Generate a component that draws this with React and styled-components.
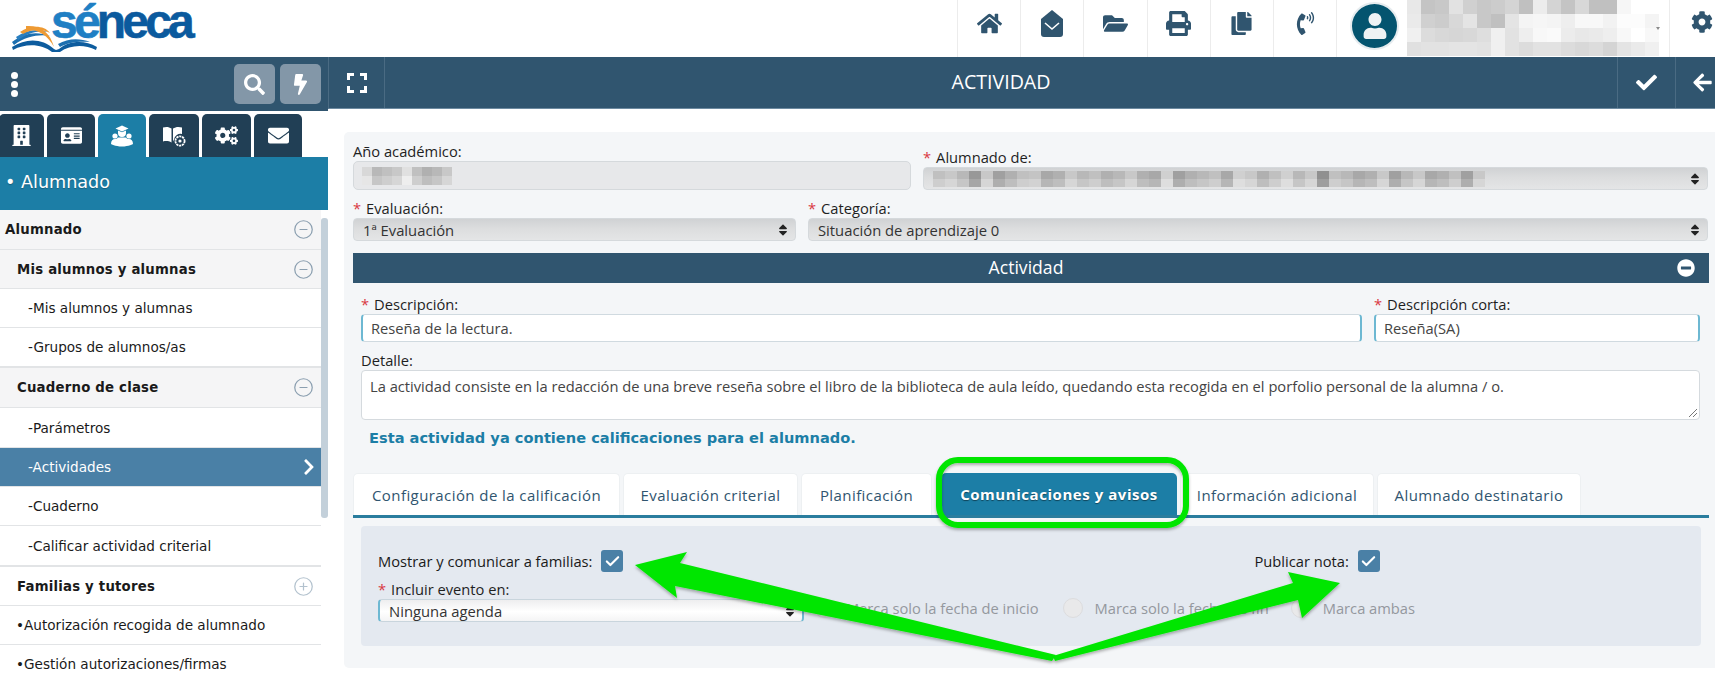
import React from "react";
import styled, { createGlobalStyle } from "styled-components";
import {
  FaHome, FaFolderOpen, FaPrint, FaCopy, FaPhoneVolume, FaCog, FaUser,
  FaSearch, FaBolt, FaBuilding, FaIdCard, FaCogs, FaEnvelope, FaCheck, FaArrowLeft,
  FaMinusCircle, FaChevronRight, FaSort,
} from "react-icons/fa";
import { LuCheck, LuCircleMinus, LuCirclePlus } from "react-icons/lu";

const GlobalStyle = createGlobalStyle`
  html, body { margin: 0; padding: 0; background: #fff; height: 681px; overflow: hidden; }
  body { font-family: "Open Sans", "DejaVu Sans", sans-serif; font-size: 14.7px; color: #1c1c1c; }
  * { box-sizing: border-box; }
`;

const Page = styled.div`
  position: relative;
  width: 1715px;
  height: 681px;
  overflow: hidden;
`;

const Header = styled.header`
  height: 57px;
  display: flex;
  align-items: stretch;
`;
const LogoWrap = styled.div`
  width: 957px;
`;
const HeaderIcon = styled.div`
  width: 63.2px;
  border-left: 1px solid #ececec;
  display: flex;
  align-items: center;
  justify-content: center;
  color: #30556f;
  font-size: ${(p) => p.$size || 25}px;
  padding-bottom: 10px;
`;
const Profile = styled.div`
  width: 333px;
  border-left: 1px solid #ececec;
  display: flex;
  align-items: center;
  padding-left: 13px;
`;
const Avatar = styled.div`
  width: 49px;
  height: 48px;
  flex-shrink: 0;
  margin-top: -5px;
  border-radius: 50%;
  background: #04546f;
  border: 2px solid #e6ecef;
  color: #eef2f4;
  font-size: 26px;
  display: flex;
  align-items: center;
  justify-content: center;
`;
const Pixelated = styled.svg`
  margin-left: 8px;
  display: block;
`;
const GearCell = styled.div`
  flex: 1;
  border-left: 1px solid #ececec;
  display: flex;
  align-items: center;
  padding: 0 0 13px 21px;
  color: #30556f;
  font-size: 22px;
`;

const Body = styled.div`
  display: flex;
  height: 624px;
`;

const Sidebar = styled.aside`
  position: relative;
  width: 328px;
  flex-shrink: 0;
  overflow: hidden;
  font-family: "DejaVu Sans", sans-serif;
`;
const SideToolbar = styled.div`
  height: 54px;
  background: #30556f;
  display: flex;
  align-items: center;
  padding-right: 7px;
  gap: 5px;
`;
const Dots = styled.div`
  width: 8px;
  margin: 0 auto 0 11px;
  display: flex;
  flex-direction: column;
  gap: 2px;
  span {
    width: 7px;
    height: 7px;
    border-radius: 50%;
    background: #fff;
  }
`;
const ToolButton = styled.div`
  width: 41px;
  height: 40px;
  border-radius: 5px;
  background: #8397a8;
  color: #fff;
  font-size: ${(p) => p.$size || 21}px;
  display: flex;
  align-items: center;
  justify-content: center;
`;
const ModuleTabs = styled.div`
  height: 46px;
  padding-top: 3px;
  display: flex;
  gap: 3px;
  margin-left: -1px;
`;
const ModuleTab = styled.div`
  width: ${(p) => p.$w}px;
  border-radius: 5px 5px 0 0;
  background: ${(p) => (p.$active ? "#1c7ea6" : "#213f55")};
  color: #fff;
  font-size: ${(p) => p.$size || 21}px;
  display: flex;
  align-items: center;
  justify-content: center;
`;
const Band = styled.div`
  height: 53px;
  background: #1c7ea6;
  color: #fff;
  font-size: 17.6px;
  display: flex;
  align-items: center;
  padding: 0 0 4px 5px;
  text-shadow: 0 1px 1px rgba(0, 0, 0, 0.25);
`;
const Menu = styled.nav`
  width: 321px;
`;
const Row = styled.div`
  height: ${(p) => p.$h || 39}px;
  display: flex;
  align-items: center;
  justify-content: space-between;
  padding-left: ${(p) => p.$indent || 0}px;
  padding-right: 7px;
  font-size: ${(p) => (p.$bold ? 13.3 : 13.6)}px;
  font-weight: ${(p) => (p.$bold ? 700 : 400)};
  letter-spacing: ${(p) => (p.$bold ? 0.2 : 0)}px;
  background: ${(p) => (p.$active ? "#4a80a6" : p.$group ? "#f5f5f6" : "#fff")};
  color: ${(p) => (p.$active ? "#fff" : "#1a1a1a")};
  border-bottom: ${(p) => (p.$thick ? 2 : 1)}px solid #e2e4e6;
`;
const RowIcon = styled.span`
  display: flex;
  color: ${(p) => p.$color || "#8b9fb0"};
  font-size: ${(p) => p.$size || 21}px;
  margin-right: ${(p) => p.$mr || 0}px;
`;
const ScrollThumb = styled.div`
  position: absolute;
  top: 161px;
  right: 0;
  width: 7px;
  height: 300px;
  border-radius: 3px;
  background: #c3d0da;
`;

const Main = styled.main`
  flex: 1;
  display: flex;
  flex-direction: column;
`;
const TitleBar = styled.div`
  height: 52px;
  background: #30556f;
  color: #fff;
  display: flex;
  align-items: stretch;
  border-left: 1px solid #4a6b83;
  border-bottom: 1px solid #6d8aa0;
`;
const BarCell = styled.div`
  width: ${(p) => p.$w}px;
  display: flex;
  align-items: center;
  justify-content: ${(p) => p.$justify || "center"};
  padding-left: ${(p) => p.$pl || 0}px;
  font-size: 21px;
  ${(p) => p.$line && "border-left: 1px solid #4a6b83;"}
  ${(p) => p.$lineRight && "border-right: 1px solid #4a6b83;"}
`;
const Title = styled.div`
  flex: 1;
  display: flex;
  align-items: center;
  justify-content: center;
  font-size: 19.6px;
  padding-bottom: 2px;
`;
const Card = styled.section`
  margin: 23px 0 0 16px;
  height: 536px;
  background: #f4f6f8;
  border-radius: 5px 0 0 5px;
  padding: 10px 6px 0 9px;
`;
const FormRow = styled.div`
  display: flex;
  align-items: flex-end;
  gap: ${(p) => p.$gap || 12}px;
  margin-top: ${(p) => p.$mt || 0}px;
  padding: ${(p) => (p.$inset ? "0 9px 0 8px" : "0 1px 0 0")};
`;
const Field = styled.div`
  flex: ${(p) => (p.$w ? `0 0 ${p.$w}px` : 1)};
  display: flex;
  flex-direction: column;
  min-width: 0;
`;
const Label = styled.label`
  font-size: 14.7px;
  line-height: 19px;
  height: 19px;
  color: #1f1f1f;
  white-space: nowrap;
  b {
    color: #d9383f;
    font-weight: 400;
    margin-right: 5px;
  }
`;
const ReadOnly = styled.div`
  height: 29px;
  border: 1px solid #d5d9dc;
  border-radius: 5px;
  background: #e7e8ea;
  padding: 5px 8px;
`;
const SelectBox = styled.div`
  height: ${(p) => p.$h || 23}px;
  border: 1px solid ${(p) => (p.$focus ? "#c9d5dd" : "#d5d9dc")};
  ${(p) => p.$focus && "border-left: 2px solid #6db8d2; border-right: 2px solid #6db8d2;"}
  border-radius: 4px;
  background: ${(p) =>
    p.$light
      ? "linear-gradient(#eeeeef, #fff 55%, #f4f4f5)"
      : "linear-gradient(#d0d2d4, #dcddde 45%, #e4e5e6)"};
  display: flex;
  align-items: center;
  justify-content: space-between;
  padding: 0 5px 0 9px;
  font-size: 14.8px;
  color: #333;
`;
const Sorter = styled.span`
  display: flex;
  font-size: 14px;
  color: #222;
`;
const ActivityBand = styled.div`
  position: relative;
  height: 30px;
  margin: 12px 0 0;
  padding: 0 10px 2px 0;
  background: #30556f;
  color: #fff;
  font-size: 17.6px;
  display: flex;
  align-items: center;
  justify-content: center;
`;
const CollapseIcon = styled.span`
  position: absolute;
  right: 14px;
  top: 6px;
  display: flex;
  font-size: 18px;
`;
const TextInput = styled.div`
  height: 28px;
  background: #fff;
  border: 1px solid #d0dae0;
  border-left: 2px solid #6db8d2;
  border-right: 2px solid #6db8d2;
  border-radius: 4px;
  padding: 0 8px;
  display: flex;
  align-items: center;
  font-size: 14.7px;
  color: #444;
`;
const TextArea = styled.div`
  position: relative;
  height: 50px;
  background: #fff;
  border: 1px solid #d5dade;
  border-radius: 4px;
  padding: 5px 8px;
  font-size: 14.7px;
  color: #444;
`;
const Grip = styled.svg`
  position: absolute;
  right: 1px;
  bottom: 1px;
`;
const Notice = styled.p`
  margin: 8px 0 0 16px;
  height: 20px;
  font-size: 14.6px;
  line-height: 20px;
  font-weight: 700;
  color: #1c7ea6;
  font-family: "DejaVu Sans", sans-serif;
`;
const Tabs = styled.div`
  display: flex;
  gap: 3px;
  height: 45px;
  margin: 25px 0 0;
  border-bottom: 3px solid #2a7d9e;
`;
const Tab = styled.div`
  width: ${(p) => p.$w}px;
  margin-left: ${(p) => p.$ml || 0}px;
  height: 42px;
  display: flex;
  align-items: center;
  justify-content: center;
  border-radius: 5px 5px 0 0;
  background: ${(p) => (p.$active ? "#1c7ea6" : "#fff")};
  color: ${(p) => (p.$active ? "#fff" : "#30556f")};
  font-weight: ${(p) => (p.$active ? 700 : 400)};
  font-size: 15px;
  letter-spacing: ${(p) => (p.$active ? 0.55 : 0.42)}px;
  ${(p) => !p.$active && "border: 1px solid #edf0f2; border-bottom: 0;"}
  ${(p) => p.$active && "text-shadow: 0 1px 1px rgba(0,0,0,.45);"}
`;
const Panel = styled.div`
  height: 120px;
  margin: 8px 8px 0 8px;
  background: #e4e9f0;
  border-radius: 4px;
  padding: 24px 17px 0;
`;
const CheckRow = styled.div`
  display: flex;
  height: 22px;
  align-items: center;
  font-size: 14.7px;
  color: #1a1a1a;
`;
const CheckGroup = styled.div`
  display: flex;
  align-items: center;
  gap: 9px;
  margin-left: ${(p) => p.$ml || 0}px;
`;
const CheckBox = styled.span`
  width: 22px;
  height: 22px;
  border-radius: 3px;
  background: #4a80a6;
  color: #fff;
  font-size: 17px;
  display: flex;
  align-items: center;
  justify-content: center;
`;
const EventRow = styled.div`
  display: flex;
  align-items: flex-end;
  margin-top: 8px;
`;
const RadioOption = styled.div`
  display: flex;
  align-items: center;
  gap: 12px;
  margin-left: ${(p) => p.$ml}px;
  height: 29px;
  font-size: 14.7px;
  color: #94989e;
  white-space: nowrap;
`;
const Radio = styled.span`
  width: 20px;
  height: 20px;
  flex-shrink: 0;
  border-radius: 50%;
  background: #e9e9ea;
  border: 1px solid #dcdcde;
`;

const Overlay = styled.svg`
  position: absolute;
  left: 0;
  top: 0;
  pointer-events: none;
`;

const Logo = () => (
  <svg width="200" height="57" viewBox="0 0 200 57">
    <path d="M12 42 C24 33 36 31 50 36 C40 34 26 36 14 45 Z" fill="#1c6fb0" />
    <path d="M16 37 C26 30 38 28 48 32 C38 30 27 33 18 40 Z" fill="#2a7fc0" />
    <path d="M20 32 C30 25 44 25 50 33 C43 29 31 29 23 34 Z" fill="#ee9a33" />
    <path d="M26 26 C40 25 50 32 54 47 C48 36 40 30 26 29 Z" fill="#ee9a33" />
    <path d="M12 47 C26 38 42 38 54 49 L56 50 L59 49 C68 41 84 39 97 47 L96 50 C84 44 70 45 60 52 L52 52 C42 44 26 43 13 50 Z" fill="#0d5c9e" />
    <path d="M58 44 C68 38 80 38 90 42 C80 41 68 42 60 47 Z" fill="#1c6fb0" />
    <text x="51" y="38" fontFamily="Liberation Sans" fontWeight="700" fontSize="48" letterSpacing="-3.8" strokeWidth="0.6">
      <tspan fill="#1f7fc4" stroke="#1f7fc4">sé</tspan>
      <tspan fill="#0b5a9e" stroke="#0b5a9e">neca</tspan>
    </text>
  </svg>
);

// user name, pixelated in the reference
const blurCells = [
  "e8 c4 c8 e2 d0 c8 cc d4 c0 ec d4 c4 d8 c0 c0 f6 ff ff",
  "ea d0 cc d8 e4 c8 c0 e4 f4 f6 f4 ee f8 f8 f2 fc fc f4",
  "f0 dc d8 d6 d8 de f0 e2 ee f8 fa ec e8 ea ee f8 ff f8",
  "e0 e2 e2 e4 e4 e2 f0 e2 dc e2 e2 dc d8 dc d4 e4 ea f0",
];

const Blur = () => (
  <Pixelated width="254" height="57" viewBox="0 0 254 57">
    {blurCells.map((row, y) =>
      row.split(" ").map((c, x) => (
        <rect key={`${x}-${y}`} x={x * 14} y={y * 14} width="14" height="14" fill={`#${c}${c}${c}`} />
      ))
    )}
    <path d="M249 27h4l-2 3z" fill="#8a8a8a" />
  </Pixelated>
);

const lighter = (c) => {
  const v = Math.min(parseInt(c, 16) + 14, 255).toString(16);
  return `#${v}${v}${v}`;
};

const BlurText = ({ cells, w = 9, h = 10 }) => (
  <svg width={cells.length * w} height={h * 2} style={{ display: "block" }}>
    {cells.map((c, i) => (
      <React.Fragment key={i}>
        <rect x={i * w} y="0" width={w} height={h} fill={`#${c}${c}${c}`} />
        <rect x={i * w} y={h} width={w} height={h} fill={lighter(c)} />
      </React.Fragment>
    ))}
  </svg>
);

const MailOpenIcon = () => (
  <svg width="24" height="29" viewBox="0 0 24 29">
    <path d="M12 1 L23 10 V25 a3 3 0 0 1-3 3 H4 a3 3 0 0 1-3-3 V10 Z" fill="#30556f" />
    <path d="M5 14 L12 20 L19 14" fill="none" stroke="#fff" strokeWidth="1.600" />
  </svg>
);

const TeacherIcon = () => (
  <svg width="24" height="24" viewBox="0 0 24 24" fill="#fff">
    <path d="M12 1.500l6.500 3-6.500 3-6.500-3z" />
    <path d="M8 6.500l4 1.800 4-1.800v2.500a4 4 0 0 1-8 0z" />
    <circle cx="5" cy="12" r="2.600" />
    <circle cx="19" cy="12" r="2.600" />
    <path d="M1 20c0-3.500 1.800-5 4-5h1.500c.6-1 1.500-1.600 2.500-1.600h6c1 0 1.900.6 2.500 1.600H19c2.200 0 4 1.500 4 5 0 0-4 2.500-11 2.500S1 20 1 20z" />
  </svg>
);

const BookGearIcon = () => (
  <svg width="24" height="24" viewBox="0 0 24 24">
    <path d="M1 3.500c3-1 6-.8 8.500 1v14c-2.500-1.500-5.500-1.800-8.500-1z" fill="#fff" />
    <path d="M11 4.500c2.500-1.800 6-2 9-1v6.500a6.500 6.500 0 0 0-8 5.500l-1 2z" fill="#fff" />
    <circle cx="18" cy="17" r="4.600" fill="none" stroke="#fff" strokeWidth="1.800" strokeDasharray="2.200 0.700" />
    <circle cx="18" cy="17" r="1.600" fill="#fff" />
  </svg>
);

const yearCells = "d8 b8 c0 c8 e0 c0 b0 b8 c8".split(" ");
const nameCells = "c0 c8 b8 98 c8 a0 b0 c0 c4 a8 b0 c8 b8 c0 b0 b8 c8 b0 a8 d0 a0 b0 b8 c0 a8 d0 c8 b0 c0 d0 b8 c8 90 c0 b8 a8 b0 c8 a0 b8 c8 a8 b0 c0 a0 c8".split(" ");

const App = () => (
  <Page>
    <GlobalStyle />
    <Header>
      <LogoWrap><Logo /></LogoWrap>
      <HeaderIcon><FaHome /></HeaderIcon>
      <HeaderIcon><MailOpenIcon /></HeaderIcon>
      <HeaderIcon><FaFolderOpen /></HeaderIcon>
      <HeaderIcon><FaPrint /></HeaderIcon>
      <HeaderIcon $size={23}><FaCopy /></HeaderIcon>
      <HeaderIcon $size={23}><FaPhoneVolume /></HeaderIcon>
      <Profile>
        <Avatar><FaUser /></Avatar>
        <Blur />
      </Profile>
      <GearCell><FaCog /></GearCell>
    </Header>
    <Body>
      <Sidebar>
        <SideToolbar>
          <Dots><span /><span /><span /></Dots>
          <ToolButton><FaSearch /></ToolButton>
          <ToolButton><FaBolt /></ToolButton>
        </SideToolbar>
        <ModuleTabs>
          <ModuleTab $w={45}><FaBuilding /></ModuleTab>
          <ModuleTab $w={48}><FaIdCard /></ModuleTab>
          <ModuleTab $w={48} $active><TeacherIcon /></ModuleTab>
          <ModuleTab $w={50}><BookGearIcon /></ModuleTab>
          <ModuleTab $w={49} $size={23}><FaCogs /></ModuleTab>
          <ModuleTab $w={48}><FaEnvelope /></ModuleTab>
        </ModuleTabs>
        <Band>• Alumnado</Band>
        <Menu>
          <Row $bold $group $indent={5} $h={40}>Alumnado<RowIcon><LuCircleMinus strokeWidth={1.4} /></RowIcon></Row>
          <Row $bold $group $indent={17}>Mis alumnos y alumnas<RowIcon><LuCircleMinus strokeWidth={1.4} /></RowIcon></Row>
          <Row $indent={28}>-Mis alumnos y alumnas</Row>
          <Row $indent={28} $h={40} $thick>-Grupos de alumnos/as</Row>
          <Row $bold $group $indent={17} $h={40}>Cuaderno de clase<RowIcon><LuCircleMinus strokeWidth={1.4} /></RowIcon></Row>
          <Row $indent={28} $h={40}>-Parámetros</Row>
          <Row $indent={28} $active>-Actividades<RowIcon $color="#fff" $size={18} $mr={-4}><FaChevronRight /></RowIcon></Row>
          <Row $indent={28}>-Cuaderno</Row>
          <Row $indent={28} $h={41} $thick>-Calificar actividad criterial</Row>
          <Row $bold $indent={17}>Familias y tutores<RowIcon $color="#b3c2ce"><LuCirclePlus strokeWidth={1.4} /></RowIcon></Row>
          <Row $indent={16}>•Autorización recogida de alumnado</Row>
          <Row $indent={16}>•Gestión autorizaciones/firmas</Row>
        </Menu>
        <ScrollThumb />
      </Sidebar>
      <Main>
        <TitleBar>
          <BarCell $w={56} $lineRight>
            <svg width="20" height="20" viewBox="0 0 20 20" fill="none" stroke="#fff" strokeWidth="3">
              <path d="M1.500 7V1.500H7M13 1.500h5.500V7M18.500 13v5.500H13M7 18.500H1.500V13" />
            </svg>
          </BarCell>
          <Title>ACTIVIDAD</Title>
          <BarCell $w={58} $line><FaCheck /></BarCell>
          <BarCell $w={40} $line $justify="flex-start" $pl={16}><FaArrowLeft /></BarCell>
        </TitleBar>
        <Card>
          <FormRow>
            <Field $w={558}>
              <Label>Año académico:</Label>
              <ReadOnly><BlurText cells={yearCells} w={10} h={9} /></ReadOnly>
            </Field>
            <Field>
              <Label><b>*</b>Alumnado de:</Label>
              <SelectBox $h={23}>
                <BlurText cells={nameCells} w={12} h={8} />
                <Sorter><FaSort /></Sorter>
              </SelectBox>
            </Field>
          </FormRow>
          <FormRow $mt={9}>
            <Field $w={443}>
              <Label><b>*</b>Evaluación:</Label>
              <SelectBox>1ª Evaluación<Sorter><FaSort /></Sorter></SelectBox>
            </Field>
            <Field>
              <Label><b>*</b>Categoría:</Label>
              <SelectBox>Situación de aprendizaje 0<Sorter><FaSort /></Sorter></SelectBox>
            </Field>
          </FormRow>
          <ActivityBand>
            Actividad
            <CollapseIcon><FaMinusCircle /></CollapseIcon>
          </ActivityBand>
          <FormRow $mt={12} $inset>
            <Field>
              <Label><b>*</b>Descripción:</Label>
              <TextInput>Reseña de la lectura.</TextInput>
            </Field>
            <Field $w={326}>
              <Label><b>*</b>Descripción corta:</Label>
              <TextInput>Reseña(SA)</TextInput>
            </Field>
          </FormRow>
          <FormRow $mt={9} $inset>
            <Field>
              <Label>Detalle:</Label>
              <TextArea>
                La actividad consiste en la redacción de una breve reseña sobre el libro de la biblioteca de aula leído, quedando esta recogida en el porfolio personal de la alumna / o.
                <Grip width="10" height="10" viewBox="0 0 10 10" stroke="#777" strokeWidth="1"><path d="M1 9L9 1M5 9L9 5" /></Grip>
              </TextArea>
            </Field>
          </FormRow>
          <Notice>Esta actividad ya contiene calificaciones para el alumnado.</Notice>
          <Tabs>
            <Tab $w={267}>Configuración de la calificación</Tab>
            <Tab $w={175}>Evaluación criterial</Tab>
            <Tab $w={131}>Planificación</Tab>
            <Tab $w={236} $active $ml={6}>Comunicaciones y avisos</Tab>
            <Tab $w={194}>Información adicional</Tab>
            <Tab $w={204}>Alumnado destinatario</Tab>
          </Tabs>
          <Panel>
            <CheckRow>
              <CheckGroup>Mostrar y comunicar a familias:<CheckBox><LuCheck strokeWidth={3} /></CheckBox></CheckGroup>
              <CheckGroup $ml={631}>Publicar nota:<CheckBox><LuCheck strokeWidth={3} /></CheckBox></CheckGroup>
            </CheckRow>
            <EventRow>
              <Field $w={426}>
                <Label><b>*</b>Incluir evento en:</Label>
                <SelectBox $focus $light>Ninguna agenda<Sorter><FaSort /></Sorter></SelectBox>
              </Field>
              <RadioOption $ml={10}><Radio />Marca solo la fecha de inicio</RadioOption>
              <RadioOption $ml={24}><Radio />Marca solo la fecha de fin</RadioOption>
              <RadioOption $ml={22}><Radio />Marca ambas</RadioOption>
            </EventRow>
          </Panel>
        </Card>
      </Main>
    </Body>
    <Overlay width="1715" height="681" viewBox="0 0 1715 681">
      <defs>
        <filter id="sh" x="-5%" y="-5%" width="110%" height="110%">
          <feDropShadow dx="0" dy="2" stdDeviation="1.500" floodColor="#000" floodOpacity="0.3" />
        </filter>
      </defs>
      <g fill="#00e600" filter="url(#sh)">
        <rect x="939" y="460" width="247" height="65" rx="19" fill="none" stroke="#00e600" strokeWidth="6" />
        <path d="M635 565 L687 552 L680 563 L1056 655 L1052 661 L675 586 L677 598 Z" />
        <path d="M1340 583 L1288 572 L1293 583 L1053 656 L1055 661 L1298 600 L1302 618 Z" />
      </g>
    </Overlay>
  </Page>
);

export default App;
